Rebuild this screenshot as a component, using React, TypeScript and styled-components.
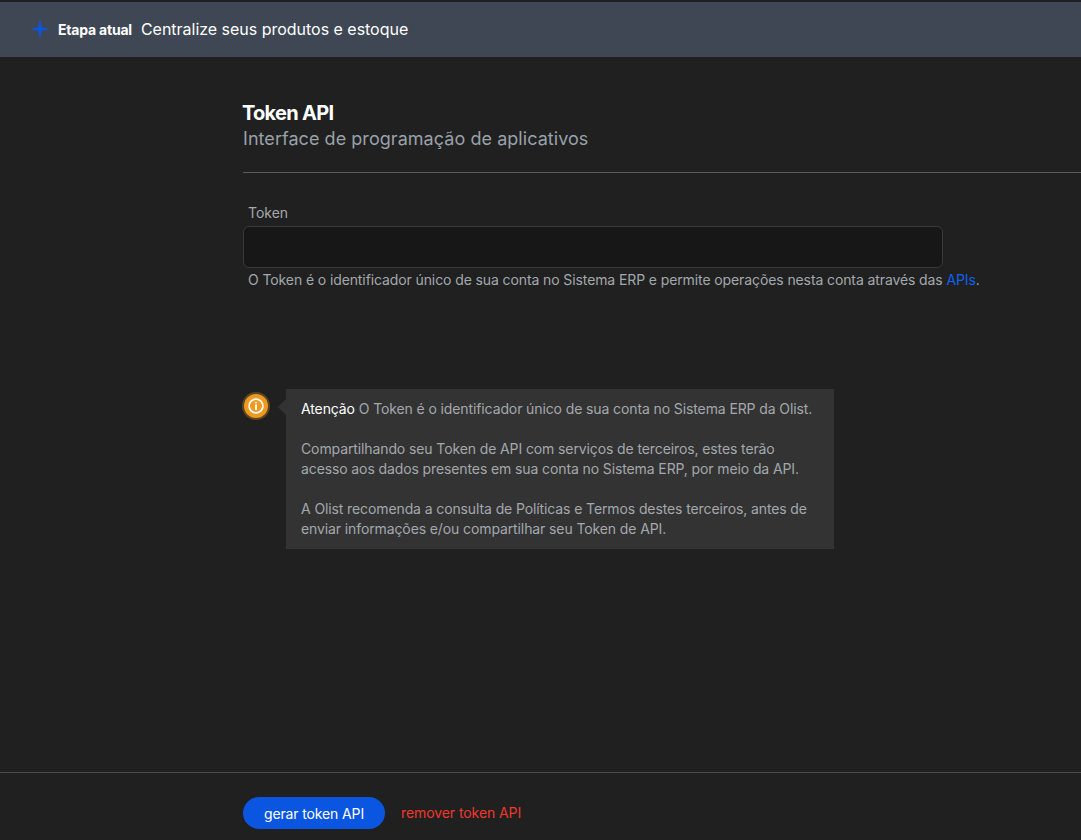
import * as React from 'react';
import styled, { createGlobalStyle } from 'styled-components';

const GlobalStyle = createGlobalStyle`
  html, body {
    margin: 0;
    padding: 0;
    background: #202020;
    font-family: Inter, "Liberation Sans", sans-serif;
  }
`;

const App = () => (
  <Page>
    <GlobalStyle />
    <Banner>
      <Spark viewBox="0 0 20 20">
        <path d="M10 0 L11.7 8.3 L20 10 L11.7 11.7 L10 20 L8.3 11.7 L0 10 L8.3 8.3 Z" />
      </Spark>
      <StepLabel>Etapa atual</StepLabel>
      <StepName>Centralize seus produtos e estoque</StepName>
    </Banner>
    <Main>
      <Title>Token API</Title>
      <Subtitle>Interface de programação de aplicativos</Subtitle>
      <Divider />
      <Field>
        <FieldLabel htmlFor="token">Token</FieldLabel>
        <TokenInput id="token" />
        <Hint>
          O Token é o identificador único de sua conta no Sistema ERP e permite operações nesta conta através das{' '}
          <HintLink href="#apis">APIs</HintLink>.
        </Hint>
      </Field>
      <Notice>
        <NoticeIcon>
          <svg width="16" height="16" viewBox="0 0 16 16" fill="none" stroke="#fff" strokeWidth="1.7">
            <circle cx="8" cy="8" r="6.9" />
            <path d="M8 7.2v4" strokeLinecap="round" strokeWidth="2" />
            <circle cx="8" cy="4.6" r="0.6" fill="#fff" strokeWidth="0.9" />
          </svg>
        </NoticeIcon>
        <NoticeBox>
          <NoticeText>
            <Strong>Atenção</Strong> O Token é o identificador único de sua conta no Sistema ERP da Olist.
          </NoticeText>
          <NoticeText>
            Compartilhando seu Token de API com serviços de terceiros, estes terão
            <br />
            acesso aos dados presentes em sua conta no Sistema ERP, por meio da API.
          </NoticeText>
          <NoticeText>
            A Olist recomenda a consulta de Políticas e Termos destes terceiros, antes de
            <br />
            enviar informações e/ou compartilhar seu Token de API.
          </NoticeText>
        </NoticeBox>
      </Notice>
    </Main>
    <Footer>
      <PrimaryButton>gerar token API</PrimaryButton>
      <DangerLink href="#remover">remover token API</DangerLink>
    </Footer>
  </Page>
);

export default App;

const Page = styled.div`
  width: 100%;
  height: 840px;
  overflow: hidden;
  display: flex;
  flex-direction: column;
  background: #202020;
`;

const Banner = styled.div`
  height: 55px;
  margin-top: 2px;
  padding-left: 30px;
  display: flex;
  align-items: center;
  background: #3e4753;
  flex-shrink: 0;
`;

const Spark = styled.svg`
  width: 20px;
  height: 20px;
  fill: #0a56e0;
  margin-right: 8px;
  margin-bottom: 2px;
`;

const StepLabel = styled.span`
  font-size: 14px;
  font-weight: 700;
  letter-spacing: -0.2px;
  color: #fff;
  margin-right: 9px;
`;

const StepName = styled.span`
  font-size: 16px;
  letter-spacing: -0.02px;
  color: #fff;
  margin-bottom: 2px;
`;

const Main = styled.main`
  flex: 1;
  padding: 44px 0 0 243px;
`;

const Title = styled.h1`
  margin: 0 0 0 -1px;
  font-size: 20px;
  line-height: 24px;
  font-weight: 700;
  letter-spacing: -0.72px;
  color: #fff;
`;

const Subtitle = styled.p`
  margin: 2px 0 0;
  font-size: 18px;
  line-height: 24px;
  letter-spacing: 0.05px;
  color: #99a1aa;
`;

const Divider = styled.hr`
  margin: 21px 0 0;
  border: 0;
  border-top: 1px solid #5a5a5a;
`;

const Field = styled.div`
  margin-top: 30px;
  width: 880px;
`;

const FieldLabel = styled.label`
  display: block;
  padding-left: 5px;
  font-size: 14px;
  line-height: 20px;
  color: #a3a8ad;
`;

const TokenInput = styled.input`
  display: block;
  box-sizing: border-box;
  width: 700px;
  height: 42px;
  margin-top: 3px;
  background: #171717;
  border: 1px solid #3a3a3a;
  border-radius: 6px;
  outline: none;
`;

const Hint = styled.p`
  margin: 2px 0 0;
  padding-left: 5px;
  font-size: 14px;
  line-height: 20px;
  letter-spacing: -0.105px;
  color: #a3a8ad;
`;

const HintLink = styled.a`
  color: #0f62f0;
  text-decoration: none;
`;

const Notice = styled.div`
  margin-top: 99px;
  display: flex;
  align-items: flex-start;
`;

const NoticeIcon = styled.div`
  width: 24px;
  height: 24px;
  margin: 5px 0 0 1px;
  flex-shrink: 0;
  display: flex;
  align-items: center;
  justify-content: center;
  border-radius: 50%;
  background: #ee9a1f;
  box-shadow: 0 0 0 2px #5a4422;
`;

const NoticeBox = styled.div`
  position: relative;
  box-sizing: border-box;
  width: 548px;
  height: 160px;
  margin-left: 18px;
  padding: 10px 15px;
  background: #333333;
  display: flex;
  flex-direction: column;
  gap: 20px;

  &::before {
    content: '';
    position: absolute;
    left: -6px;
    top: 12px;
    width: 12px;
    height: 12px;
    background: #333333;
    transform: rotate(45deg);
    clip-path: polygon(0 0, 0 100%, 100% 100%);
  }
`;

const NoticeText = styled.p`
  margin: 0;
  font-size: 14px;
  line-height: 20px;
  letter-spacing: -0.11px;
  color: #a3a8ad;
`;

const Strong = styled.span`
  color: #fff;
`;

const Footer = styled.footer`
  height: 68px;
  flex-shrink: 0;
  box-sizing: border-box;
  border-top: 1px solid #4a4a4a;
  padding: 24px 0 0 243px;
  display: flex;
  align-items: flex-start;
  gap: 16px;
`;

const PrimaryButton = styled.button`
  width: 142px;
  height: 32px;
  padding: 0;
  border: 0;
  border-radius: 16px;
  background: #0a56e0;
  color: #fff;
  font-family: inherit;
  font-size: 14px;
  letter-spacing: -0.13px;
`;

const DangerLink = styled.a`
  line-height: 32px;
  font-size: 14px;
  letter-spacing: -0.08px;
  color: #f0382c;
  text-decoration: none;
`;
